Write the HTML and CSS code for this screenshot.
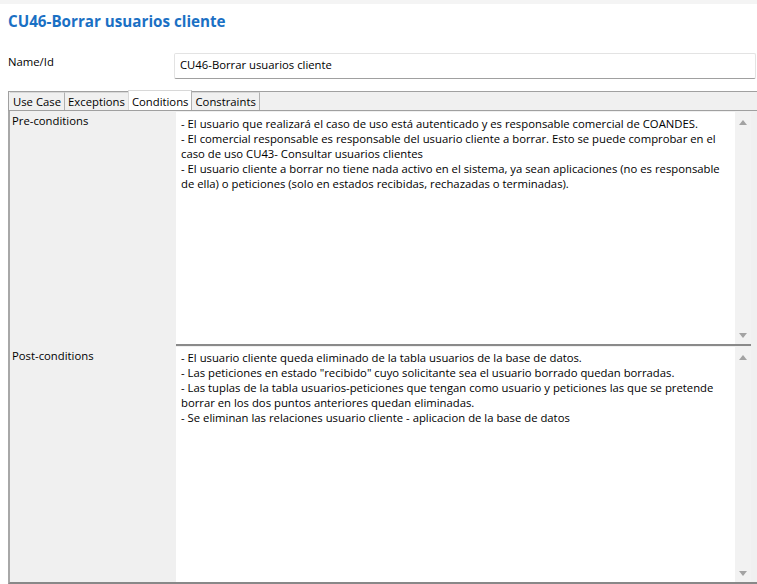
FILE: index.html
```html
<!DOCTYPE html>
<html>
<head>
<meta charset="utf-8">
<link rel="stylesheet" href="styles.css">
</head>
<body>
<div class="topband"></div>
<h1 class="title">CU46-Borrar usuarios cliente</h1>
<div class="namerow">
  <div class="namelabel">Name/Id</div>
  <div class="nameinput">CU46-Borrar usuarios cliente</div>
</div>
<div class="tabs">
  <div class="tab">Use Case</div>
  <div class="tab">Exceptions</div>
  <div class="tab active">Conditions</div>
  <div class="tab">Constraints</div>
</div>
<div class="panel">
  <div class="section pre">
    <div class="label">Pre-conditions</div>
    <div class="area">
      <div class="text">- El usuario que realizará el caso de uso está autenticado y es responsable comercial de COANDES.<br>- El comercial responsable es responsable del usuario cliente a borrar. Esto se puede comprobar en el caso de uso CU43- Consultar usuarios clientes<br>- El usuario cliente a borrar no tiene nada activo en el sistema, ya sean aplicaciones (no es responsable de ella) o peticiones (solo en estados recibidas, rechazadas o terminadas).</div>
      <div class="scroll"><span class="up"></span><span class="down"></span></div>
    </div>
  </div>
  <div class="section post">
    <div class="label">Post-conditions</div>
    <div class="area">
      <div class="text">- El usuario cliente queda eliminado de la tabla usuarios de la base de datos.<br>- Las peticiones en estado "recibido" cuyo solicitante sea el usuario borrado quedan borradas.<br>- Las tuplas de la tabla usuarios-peticiones que tengan como usuario y peticiones las que se pretende borrar en los dos puntos anteriores quedan eliminadas.<br>- Se eliminan las relaciones usuario cliente - aplicacion de la base de datos</div>
      <div class="scroll"><span class="up"></span><span class="down"></span></div>
    </div>
  </div>
</div>
</body>
</html>
```
FILE: styles.css
```css
* { box-sizing: border-box; }
html, body { margin: 0; padding: 0; }
body {
  width: 757px;
  height: 584px;
  overflow: hidden;
  background: #fff;
  font-family: "Open Sans", "Noto Sans", sans-serif;
  font-size: 11.3px;
  color: #000;
}
.topband { height: 4px; background: #f4f4f4; }
.title {
  margin: 0;
  padding: 7px 0 0 8px;
  height: 36px;
  font-size: 15.2px;
  font-weight: 700;
  color: #1a70c4;
}
.namerow {
  display: flex;
  align-items: flex-start;
  height: 51px;
  padding-top: 13px;
}
.namelabel { width: 174px; padding-left: 8px; padding-top: 1px; }
.nameinput {
  width: 582px;
  height: 26px;
  border: 1px solid #e3e3e3;
  border-bottom-color: #a0a0a0;
  border-radius: 2px;
  padding: 3px 0 0 5px;
  background: #fff;
}
.tabs {
  display: flex;
  margin-left: 8px;
  height: 20px;
  background: #f0f0f0;
  border-top: 1px solid #a0a0a0;
  border-bottom: 1px solid #a0a0a0;
  border-left: 1px solid #a0a0a0;
  padding-left: 1px;
}
.tab {
  height: 18px;
  line-height: 17px;
  padding: 0 3px;
  border-right: 1px solid #b0b0b0;
  border-top: 1px solid #d8d8d8;
  white-space: nowrap;
}
.tab.active {
  background: #fff;
  margin-top: -2px;
  height: 20px;
  line-height: 21px;
  border-left: 1px solid #d8d8d8;
  margin-left: -1px;
}
.panel {
  margin-left: 8px;
  height: 473px;
  background: #f0f0f0;
  border-left: 2px solid #a8a8a8;
  border-bottom: 2px solid #888;
  padding-top: 1px;
  display: flex;
  flex-direction: column;
}
.section { display: flex; }
.section.pre { height: 235px; }
.section.post { flex: 1; }
.label { width: 166px; padding-left: 2px; padding-top: 1px; }
.area {
  flex: 1;
  margin-right: 6px;
  background: #fff;
  display: flex;
}
.section.pre .area { border-bottom: 2px solid #8a8a8a; margin-bottom: 1px; }
.text {
  flex: 1;
  padding: 4px 4px 0 5px;
  line-height: 15px;
}
.section.post .text { padding-top: 3px; }
.scroll {
  width: 16px;
  background: #f2f2f2;
  position: relative;
}
.up, .down {
  position: absolute;
  left: 4px;
  width: 0;
  height: 0;
  border-left: 4px solid transparent;
  border-right: 4px solid transparent;
}
.up { top: 8px; border-bottom: 5px solid #a3a3a3; }
.down { bottom: 6px; border-top: 5px solid #a3a3a3; }
```
